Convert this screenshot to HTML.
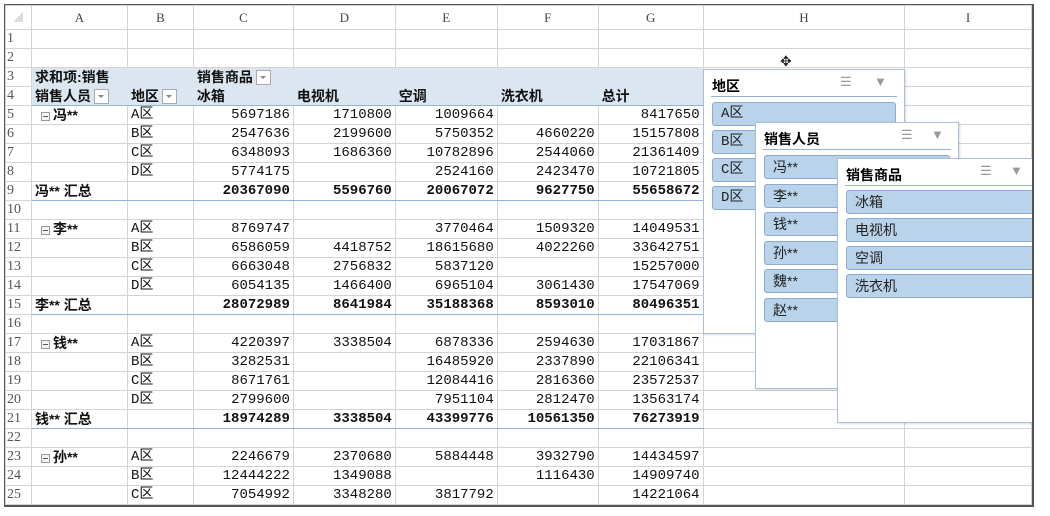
<!DOCTYPE html>
<html><head><meta charset="utf-8">
<style>
body{margin:0;background:#fff;width:1050px;height:516px;overflow:hidden;position:relative;font-family:"Liberation Sans","Noto Sans CJK SC",sans-serif}
#frame{position:absolute;left:4px;top:4px;width:1027px;height:500px;border:1px solid #555;border-right:2px solid #555;border-bottom:2px solid #555;overflow:hidden;background:#fff}
table{border-collapse:collapse;table-layout:fixed;position:absolute;left:0;top:0}
tr{height:19px}
td{height:18px;line-height:16px;border:1px solid #d4d4d4;padding:0 3px;font-size:14px;white-space:nowrap;overflow:hidden;font-family:"Liberation Mono","Noto Sans CJK SC",monospace;color:#111}
tr.h{height:24px}
tr.h td{height:23px;text-align:center;font-family:"Liberation Serif",serif;font-size:13px;color:#444;background:#fff}
td.rn{color:#555;font-family:"Liberation Serif",serif;font-size:14px;padding-left:1px;text-align:left}
td.n{text-align:right}
tr.b td.c,tr.b td.n{font-weight:bold}
.zh{font-family:"Liberation Sans","Noto Sans CJK SC",sans-serif;font-weight:bold}
tr.hd td.c{background:#dce6f1;border-color:#dce6f1}
tr.r4 td.c{border-bottom:1px solid #95b3d7}
tr.b td.c,tr.b td.n{border-top:1px solid #95b3d7;border-bottom:1px solid #95b3d7}
.dd{display:inline-block;width:13px;height:13px;border:1px solid #aaa;background:#fff;vertical-align:middle;position:relative;margin-left:3px}
.dd:after{content:"";position:absolute;left:3px;top:5px;border:3px solid transparent;border-top:3px solid #888}
.mn{display:inline-block;width:7px;height:7px;border:1px solid #999;margin:0 3px 0 6px;vertical-align:middle;position:relative;background:#f4f4f4}
.mn:after{content:"";position:absolute;left:1px;top:3px;width:5px;height:1px;background:#555}
.sl{position:absolute;background:#fff;border:1px solid #a8c0da;box-shadow:1px 1px 2px rgba(0,0,0,.15)}
.st{position:absolute;left:8px;top:6px;font-size:14px;font-weight:bold;font-family:"Liberation Sans","Noto Sans CJK SC",sans-serif}
.ul{position:absolute;left:7px;right:7px;height:1px;background:#95b3d7}
.it{position:absolute;left:8px;right:8px;height:22px;background:#b8d3ea;border:1px solid #8eaacc;border-radius:3px;font-size:14px;line-height:22px;padding-left:8px;font-family:"Liberation Sans","Noto Sans CJK SC",sans-serif;color:#222}
.ic{position:absolute;top:4px;color:#999;font-size:13px}
</style></head><body>
<div id="frame">
<table>
<colgroup><col style="width:26px"><col style="width:96px"><col style="width:66px"><col style="width:100px"><col style="width:102px"><col style="width:102px"><col style="width:101px"><col style="width:105px"><col style="width:202px"><col style="width:127px"></colgroup>
<tr class="h"><td style="background:#fff"><span style="display:inline-block;border:5px solid transparent;border-right-color:#ddd;border-bottom-color:#ddd"></span></td><td>A</td><td>B</td><td>C</td><td>D</td><td>E</td><td>F</td><td>G</td><td>H</td><td>I</td></tr>
<tr><td class="rn">1</td><td></td><td></td><td></td><td></td><td></td><td></td><td></td><td></td><td></td></tr>
<tr><td class="rn">2</td><td></td><td></td><td></td><td></td><td></td><td></td><td></td><td></td><td></td></tr>
<tr class="hd"><td class="rn">3</td><td class="c zh">求和项:销售</td><td class="c"></td><td class="c zh">销售商品<span class="dd"></span></td><td class="c"></td><td class="c"></td><td class="c"></td><td class="c"></td><td></td><td></td></tr>
<tr class="hd r4"><td class="rn">4</td><td class="c zh">销售人员<span class="dd"></span></td><td class="c zh">地区<span class="dd"></span></td><td class="c zh">冰箱</td><td class="c zh">电视机</td><td class="c zh">空调</td><td class="c zh">洗衣机</td><td class="c zh">总计</td><td></td><td></td></tr>
<tr><td class="rn">5</td><td class="zh"><span class="mn"></span>冯**</td><td>A区</td><td class="n">5697186</td><td class="n">1710800</td><td class="n">1009664</td><td class="n"></td><td class="n">8417650</td><td></td><td></td></tr>
<tr><td class="rn">6</td><td></td><td>B区</td><td class="n">2547636</td><td class="n">2199600</td><td class="n">5750352</td><td class="n">4660220</td><td class="n">15157808</td><td></td><td></td></tr>
<tr><td class="rn">7</td><td></td><td>C区</td><td class="n">6348093</td><td class="n">1686360</td><td class="n">10782896</td><td class="n">2544060</td><td class="n">21361409</td><td></td><td></td></tr>
<tr><td class="rn">8</td><td></td><td>D区</td><td class="n">5774175</td><td class="n"></td><td class="n">2524160</td><td class="n">2423470</td><td class="n">10721805</td><td></td><td></td></tr>
<tr class="b"><td class="rn">9</td><td class="c zh">冯** 汇总</td><td class="c"></td><td class="n">20367090</td><td class="n">5596760</td><td class="n">20067072</td><td class="n">9627750</td><td class="n">55658672</td><td></td><td></td></tr>
<tr><td class="rn">10</td><td></td><td></td><td></td><td></td><td></td><td></td><td></td><td></td><td></td></tr>
<tr><td class="rn">11</td><td class="zh"><span class="mn"></span>李**</td><td>A区</td><td class="n">8769747</td><td class="n"></td><td class="n">3770464</td><td class="n">1509320</td><td class="n">14049531</td><td></td><td></td></tr>
<tr><td class="rn">12</td><td></td><td>B区</td><td class="n">6586059</td><td class="n">4418752</td><td class="n">18615680</td><td class="n">4022260</td><td class="n">33642751</td><td></td><td></td></tr>
<tr><td class="rn">13</td><td></td><td>C区</td><td class="n">6663048</td><td class="n">2756832</td><td class="n">5837120</td><td class="n"></td><td class="n">15257000</td><td></td><td></td></tr>
<tr><td class="rn">14</td><td></td><td>D区</td><td class="n">6054135</td><td class="n">1466400</td><td class="n">6965104</td><td class="n">3061430</td><td class="n">17547069</td><td></td><td></td></tr>
<tr class="b"><td class="rn">15</td><td class="c zh">李** 汇总</td><td class="c"></td><td class="n">28072989</td><td class="n">8641984</td><td class="n">35188368</td><td class="n">8593010</td><td class="n">80496351</td><td></td><td></td></tr>
<tr><td class="rn">16</td><td></td><td></td><td></td><td></td><td></td><td></td><td></td><td></td><td></td></tr>
<tr><td class="rn">17</td><td class="zh"><span class="mn"></span>钱**</td><td>A区</td><td class="n">4220397</td><td class="n">3338504</td><td class="n">6878336</td><td class="n">2594630</td><td class="n">17031867</td><td></td><td></td></tr>
<tr><td class="rn">18</td><td></td><td>B区</td><td class="n">3282531</td><td class="n"></td><td class="n">16485920</td><td class="n">2337890</td><td class="n">22106341</td><td></td><td></td></tr>
<tr><td class="rn">19</td><td></td><td>C区</td><td class="n">8671761</td><td class="n"></td><td class="n">12084416</td><td class="n">2816360</td><td class="n">23572537</td><td></td><td></td></tr>
<tr><td class="rn">20</td><td></td><td>D区</td><td class="n">2799600</td><td class="n"></td><td class="n">7951104</td><td class="n">2812470</td><td class="n">13563174</td><td></td><td></td></tr>
<tr class="b"><td class="rn">21</td><td class="c zh">钱** 汇总</td><td class="c"></td><td class="n">18974289</td><td class="n">3338504</td><td class="n">43399776</td><td class="n">10561350</td><td class="n">76273919</td><td></td><td></td></tr>
<tr><td class="rn">22</td><td></td><td></td><td></td><td></td><td></td><td></td><td></td><td></td><td></td></tr>
<tr><td class="rn">23</td><td class="zh"><span class="mn"></span>孙**</td><td>A区</td><td class="n">2246679</td><td class="n">2370680</td><td class="n">5884448</td><td class="n">3932790</td><td class="n">14434597</td><td></td><td></td></tr>
<tr><td class="rn">24</td><td></td><td>B区</td><td class="n">12444222</td><td class="n">1349088</td><td class="n"></td><td class="n">1116430</td><td class="n">14909740</td><td></td><td></td></tr>
<tr><td class="rn">25</td><td></td><td>C区</td><td class="n">7054992</td><td class="n">3348280</td><td class="n">3817792</td><td class="n"></td><td class="n">14221064</td><td></td><td></td></tr>
</table>

<div style="position:absolute;left:775px;top:48px;font-size:14px;color:#222">✥</div>

<div class="sl" style="left:698px;top:64px;width:200px;height:263px">
<div class="st">地区</div><div class="ic" style="left:136px">☰</div><div class="ic" style="left:170px">▼</div>
<div class="ul" style="top:26px"></div>
<div class="it" style="top:32px;font-family:'Liberation Mono','Noto Sans CJK SC',monospace">A区</div>
<div class="it" style="top:60px;font-family:'Liberation Mono','Noto Sans CJK SC',monospace">B区</div>
<div class="it" style="top:88px;font-family:'Liberation Mono','Noto Sans CJK SC',monospace">C区</div>
<div class="it" style="top:116px;font-family:'Liberation Mono','Noto Sans CJK SC',monospace">D区</div>
</div>

<div class="sl" style="left:750px;top:117px;width:202px;height:265px">
<div class="st">销售人员</div><div class="ic" style="left:145px">☰</div><div class="ic" style="left:175px">▼</div>
<div class="ul" style="top:26px"></div>
<div class="it" style="top:32px">冯**</div>
<div class="it" style="top:61px">李**</div>
<div class="it" style="top:89px">钱**</div>
<div class="it" style="top:118px">孙**</div>
<div class="it" style="top:146px">魏**</div>
<div class="it" style="top:175px">赵**</div>
</div>

<div class="sl" style="left:832px;top:153px;width:210px;height:263px">
<div class="st">销售商品</div><div class="ic" style="left:142px">☰</div><div class="ic" style="left:172px">▼</div>
<div class="ul" style="top:26px;right:-5px"></div>
<div class="it" style="top:31px;right:-5px">冰箱</div>
<div class="it" style="top:59px;right:-5px">电视机</div>
<div class="it" style="top:87px;right:-5px">空调</div>
<div class="it" style="top:115px;right:-5px">洗衣机</div>
</div>
</div>
</body></html>
